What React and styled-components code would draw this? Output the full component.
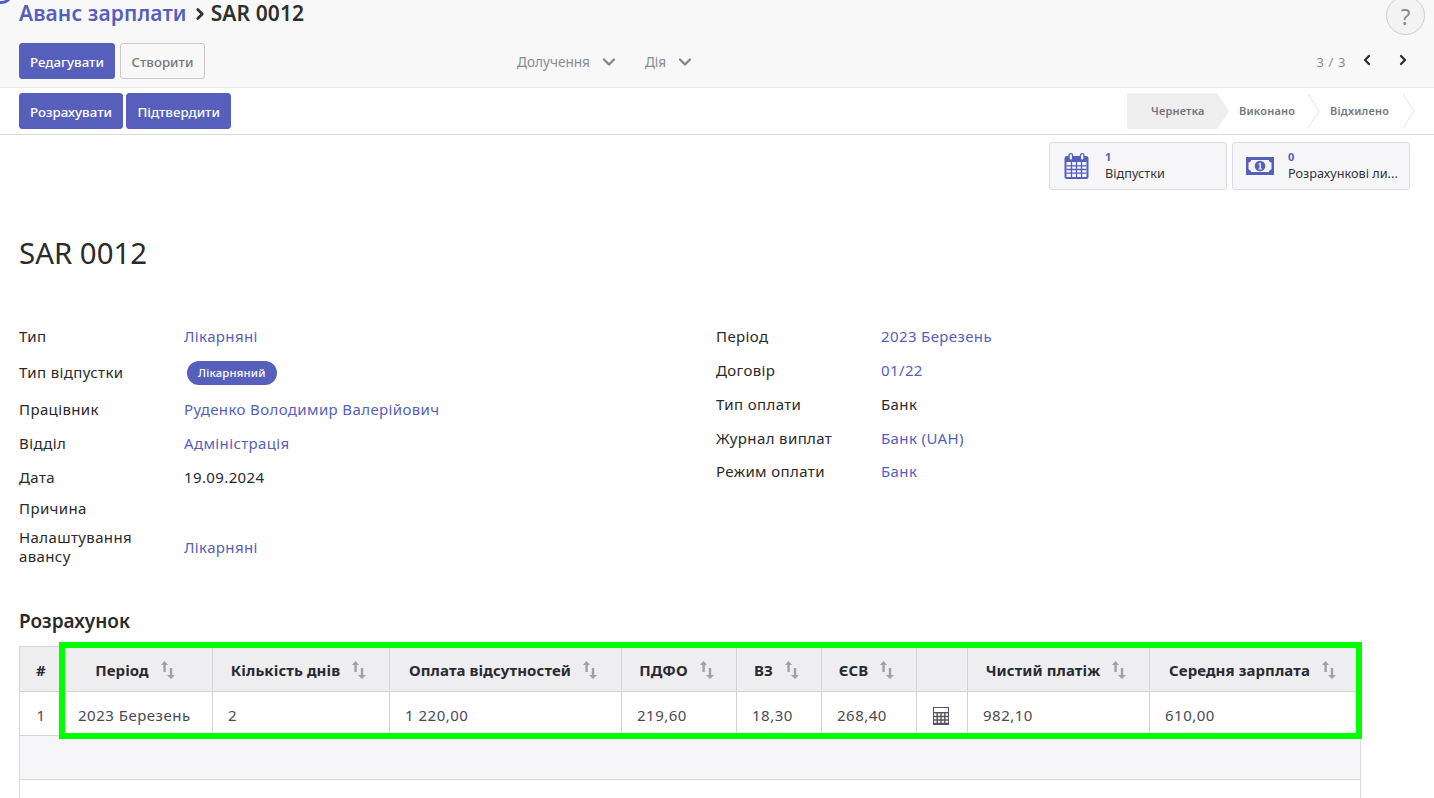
import React from "react";
import styled, { createGlobalStyle } from "styled-components";
import { ChevronRight, ChevronLeft, ChevronDown } from "lucide-react";

const Global = createGlobalStyle`
  html, body { margin: 0; padding: 0; background: #fff; }
  body { font-family: "Noto Sans", sans-serif; color: #212529; overflow: hidden; }
  * { box-sizing: border-box; }
`;

const Page = styled.div`
  position: relative;
  width: 1434px;
  height: 798px;
  overflow: hidden;
  background: #fff;
`;
const Badge = styled.div`
  position: absolute;
  left: -9px;
  top: -10px;
  width: 20px;
  height: 14px;
  border-radius: 50%;
  background: #fff;
  border: 3px solid #565fbb;
`;
const Control = styled.div`
  height: 88px;
  background: #f8f8f9;
  border-bottom: 1px solid #e9e9ea;
  padding: 0 19px;
  display: flex;
  flex-direction: column;
`;
const TopRow = styled.div`
  height: 43px;
  display: flex;
  align-items: flex-start;
  justify-content: space-between;
`;
const Crumbs = styled.div`
  display: flex;
  align-items: center;
  height: 27px;
  font-size: 21px;
  font-weight: 600;
  line-height: 27px;
  letter-spacing: 0.1px;
  color: #2f2f2f;
`;
const CrumbLink = styled.span`
  color: #565fbb;
`;
const Help = styled.div`
  width: 39px;
  height: 39px;
  margin: -4px -10px 0 0;
  border-radius: 50%;
  border: 1px solid #cfcfd2;
  background: #f3f3f4;
  color: #8a8a8e;
  font-size: 22px;
  display: flex;
  align-items: center;
  justify-content: center;
`;
const BottomRow = styled.div`
  display: grid;
  grid-template-columns: 498px 1fr auto;
  align-items: center;
  height: 36px;
`;
const Buttons = styled.div`
  display: flex;
  gap: ${(p) => p.$gap || 5}px;
`;
const Button = styled.div`
  height: 36px;
  padding: 1px ${(p) => p.$px || 10}px 0;
  display: flex;
  align-items: center;
  font-size: 13.3px;
  font-weight: 500;
  border-radius: 3px;
  background: ${(p) => (p.$ghost ? "#f8f8f9" : "#565fbb")};
  color: ${(p) => (p.$ghost ? "#77777c" : "#fff")};
  border: 1px solid ${(p) => (p.$ghost ? "#c8c8cd" : "#565fbb")};
`;
const Menus = styled.div`
  display: flex;
  gap: 26px;
`;
const Menu = styled.div`
  display: flex;
  align-items: center;
  gap: 9px;
  font-size: 13.6px;
  padding-top: 1px;
  color: #8c8c93;
`;
const Pager = styled.div`
  display: flex;
  align-items: center;
  font-size: 13px;
  letter-spacing: 0.6px;
  color: #8c8c93;
  & svg { color: #2b2b33; margin-top: -3px; }
`;
const PagerText = styled.span`
  margin-right: 13px;
  padding-top: 1px;
`;
const PagerGap = styled.span`
  width: ${(p) => p.$w}px;
  display: inline-block;
`;
const StatusRow = styled.div`
  height: 47px;
  border-bottom: 1px solid #d9d9dc;
  padding: 5px 19px 0;
  display: flex;
  justify-content: space-between;
`;
const Status = styled.div`
  display: flex;
  height: 36px;
  padding-right: 12px;
`;
const Step = styled.div`
  position: relative;
  height: 36px;
  display: flex;
  align-items: center;
  padding-bottom: 1px;
  font-size: 11px;
  font-weight: 600;
  letter-spacing: 0.2px;
  color: #75757b;
  width: ${(p) => p.$w}px;
  padding-left: ${(p) => p.$pl}px;
  background: ${(p) => (p.$on ? "#eeeeef" : "transparent")};
  border-radius: ${(p) => (p.$on ? "3px 0 0 3px" : "0")};
`;
const StepArrow = styled.svg`
  position: absolute;
  left: 100%;
  top: 0;
  width: 12px;
  height: 36px;
`;
const Buttonboxes = styled.div`
  display: flex;
  justify-content: flex-end;
  gap: 5px;
  padding: 7px 24px 0 0;
`;
const StatBox = styled.div`
  width: 178px;
  height: 48px;
  background: #f6f6f8;
  border: 1px solid #dcdce1;
  border-radius: 3px;
  display: flex;
  align-items: center;
  font-size: 12.7px;
  line-height: 17px;
  color: #33333a;
`;
const StatIcon = styled.div`
  width: 56px;
  padding-right: 3px;
  display: flex;
  justify-content: center;
`;
const StatText = styled.div`
  display: flex;
  flex-direction: column;
  margin: -1px 0 0 -1px;
`;
const StatNum = styled.span`
  font-size: 11px;
  font-weight: 700;
  line-height: 16px;
  color: #565fbb;
`;
const Title = styled.h1`
  margin: 44px 0 0 19px;
  font-size: 29.4px;
  line-height: 38px;
  font-weight: 400;
  color: #2a2a2a;
`;
const FormGrid = styled.div`
  margin: 46px 0 0 19px;
  display: grid;
  grid-template-columns: 697px 1fr;
`;
const Group = styled.div`
  display: grid;
  grid-template-columns: 165px 1fr;
  align-items: center;
  align-content: start;
  font-size: 15px;
  line-height: 19px;
  letter-spacing: 0.38px;
`;
const Label = styled.div`
  height: ${(p) => p.$h}px;
  display: flex;
  align-items: center;
  color: #2a2a2a;
`;
const Value = styled.div`
  color: ${(p) => (p.$link ? "#565fbb" : "#2a2a2a")};
`;
const Tag = styled.span`
  display: inline-flex;
  align-items: center;
  height: 24px;
  margin-left: 3px;
  padding: 0 11px;
  border-radius: 12px;
  background: #565fbb;
  color: #fff;
  font-size: 11.3px;
  font-weight: 500;
  letter-spacing: 0.2px;
`;
const Section = styled.h2`
  margin: 38px 0 0 19px;
  font-size: 19px;
  line-height: 26px;
  font-weight: 600;
  color: #2a2a2a;
`;
const TableWrap = styled.div`
  position: relative;
  margin: 12px 0 0 19px;
  width: 1341px;
`;
const Table = styled.table`
  width: 1341px;
  border-collapse: collapse;
  table-layout: fixed;
  font-size: 15px;
  letter-spacing: 0.5px;
  border-left: 1px solid #d9d9dc;
  border-right: 1px solid #d9d9dc;
  border-top: 1px solid #d9d9dc;
`;
const Th = styled.th`
  height: 45px;
  padding: 1px ${(p) => p.$pr ?? 5}px 0 0;
  background: #eeeef0;
  border-left: 1px solid #d3d3d6;
  border-bottom: 1px solid #d3d3d6;
  font-weight: 700;
  font-size: 15px;
  letter-spacing: 0.08px;
  color: #2a2a33;
  text-align: center;
`;
const ThInner = styled.span`
  display: inline-flex;
  align-items: center;
  gap: 12px;
`;
const Td = styled.td`
  height: 44px;
  padding: 2px ${(p) => p.$pr ?? 0}px 0 ${(p) => p.$pl ?? 15}px;
  border-left: 1px solid #d3d3d6;
  border-bottom: 1px solid #d3d3d6;
  color: #4a4a55;
  text-align: ${(p) => p.$align || "left"};
`;
const Filler = styled.td`
  height: 44px;
  background: #f6f6f8;
  border-bottom: 1px solid #d9d9dc;
`;
const Blank = styled.td`
  height: 40px;
`;
const Highlight = styled.div`
  position: absolute;
  left: 40px;
  top: -4px;
  width: 1303px;
  height: 97px;
  border: 6px solid #00ff00;
  pointer-events: none;
`;

const Sort = () => (
  <svg width="14" height="18" viewBox="0 0 14 18" fill="#a0a0a5" aria-hidden="true">
    <path d="M3.5 0 L7 4 H4.8 V11 H2.4 V4 H0 Z" />
    <path d="M10 18 L6 14 H8.8 V7 H11.2 V14 H14 Z" />
  </svg>
);
const Calendar = () => (
  <svg width="25" height="26" viewBox="0 0 25 26" aria-hidden="true">
    <rect x=".5" y="3" width="24" height="23" rx="2.5" fill="#565fbb" />
    <rect x="2.5" y="9" width="20" height="15" fill="#f6f6f8" />
    <path d="M2.5 12.8H22.5M2.5 16.5H22.5M2.5 20.2H22.5M7.5 9V24M12.5 9V24M17.5 9V24" stroke="#565fbb" strokeWidth="1.3" />
    <rect x="5" y=".7" width="3.6" height="6.5" rx="1.8" fill="#f6f6f8" stroke="#565fbb" strokeWidth="1.3" />
    <rect x="16.4" y=".7" width="3.6" height="6.5" rx="1.8" fill="#f6f6f8" stroke="#565fbb" strokeWidth="1.3" />
  </svg>
);
const Money = () => (
  <svg width="28" height="18" viewBox="0 0 28 18" aria-hidden="true">
    <path fillRule="evenodd" d="M0 0H28V18H0Z M5 3 C5 4.5 4 5.5 2.5 5.5 V12.5 C4 12.5 5 13.5 5 15 H23 C23 13.5 24 12.5 25.5 12.5 V5.5 C24 5.5 23 4.5 23 3Z" fill="#565fbb" />
    <circle cx="14" cy="9" r="5.3" fill="#565fbb" />
    <path d="M12.5 6.4 L14.8 5.5 V11.6 H15.9 V12.6 H12.5 V11.6 H13.5 V7 L12.5 7.4Z" fill="#fff" />
  </svg>
);
const Calculator = () => (
  <svg width="16" height="18" viewBox="0 0 16 18" aria-hidden="true" style={{ verticalAlign: "middle" }}>
    <rect x=".5" y=".5" width="15" height="17" fill="#fff" stroke="#55555f" />
    <rect x="0" y="5" width="16" height="1.4" fill="#55555f" />
    <path d="M1 9.5H15M1 13H15M1 16.5H15" stroke="#55555f" strokeWidth="1.4" />
    <path d="M4.2 6V17M8 6V17M11.8 6V17" stroke="#55555f" strokeWidth="1.4" />
  </svg>
);

const leftRows = [
  ["Тип", 36, "Лікарняні", true],
  ["Тип відпустки", 37, "tag"],
  ["Працівник", 36, "Руденко Володимир Валерійович", true],
  ["Відділ", 33, "Адміністрація", true],
  ["Дата", 34, "19.09.2024"],
  ["Причина", 29, ""],
  [<>Налаштування<br />авансу</>, 48, "Лікарняні", true],
];
const rightRows = [
  ["Період", 36, "2023 Березень", true],
  ["Договір", 33, "01/22", true],
  ["Тип оплати", 34, "Банк"],
  ["Журнал виплат", 34, "Банк (UAH)", true],
  ["Режим оплати", 33, "Банк", true],
];
const cols = [
  ["Період", 150, "2023 Березень"],
  ["Кількість днів", 177, "2"],
  ["Оплата відсутностей", 232, "1 220,00"],
  ["ПДФО", 115, "219,60"],
  ["ВЗ", 85, "18,30"],
  ["ЄСВ", 95, "268,40"],
  ["", 51, "calc"],
  ["Чистий платіж", 182, "982,10"],
  ["Середня зарплата", 211, "610,00"],
];

const FormRows = ({ rows }) => (
  <Group>
    {rows.map(([label, h, value, link], i) => (
      <React.Fragment key={i}>
        <Label $h={h}>{label}</Label>
        <Value $link={link}>{value === "tag" ? <Tag>Лікарняний</Tag> : value}</Value>
      </React.Fragment>
    ))}
  </Group>
);

const steps = [
  ["Чернетка", 90, 24, true],
  ["Виконано", 91, 22, false],
  ["Відхилено", 95, 22, false],
];

export default function App() {
  return (
    <Page>
      <Global />
      <Badge />
      <Control>
        <TopRow>
          <Crumbs>
            <CrumbLink>Аванс зарплати</CrumbLink>
            <ChevronRight size={18} strokeWidth={3.6} color="#2f2f2f" style={{ margin: "0 2px 0 4px" }} />
            SAR 0012
          </Crumbs>
          <Help>?</Help>
        </TopRow>
        <BottomRow>
          <Buttons>
            <Button>Редагувати</Button>
            <Button $ghost $px={10.5}>Створити</Button>
          </Buttons>
          <Menus>
            <Menu>Долучення <ChevronDown size={20} strokeWidth={2.8} color="#85858b" /></Menu>
            <Menu>Дія <ChevronDown size={20} strokeWidth={2.8} color="#85858b" /></Menu>
          </Menus>
          <Pager>
            <PagerText>3 / 3</PagerText>
            <ChevronLeft size={16} strokeWidth={3.4} />
            <PagerGap $w={20} />
            <ChevronRight size={16} strokeWidth={3.4} />
            <PagerGap $w={4} />
          </Pager>
        </BottomRow>
      </Control>
      <StatusRow>
        <Buttons $gap={3}>
          <Button>Розрахувати</Button>
          <Button $px={10.5}>Підтвердити</Button>
        </Buttons>
        <Status>
          {steps.map(([t, w, pl, on]) => (
            <Step key={t} $w={w} $pl={pl} $on={on}>
              {t}
              <StepArrow viewBox="0 0 12 36" aria-hidden="true">
                {on ? (
                  <path d="M0 0L12 18L0 36Z" fill="#eeeeef" />
                ) : (
                  <path d="M0 1L11 18L0 35" fill="none" stroke="#e3e3e6" />
                )}
              </StepArrow>
            </Step>
          ))}
        </Status>
      </StatusRow>
      <Buttonboxes>
        <StatBox>
          <StatIcon><Calendar /></StatIcon>
          <StatText><StatNum>1</StatNum>Відпустки</StatText>
        </StatBox>
        <StatBox>
          <StatIcon><Money /></StatIcon>
          <StatText><StatNum>0</StatNum>Розрахункові ли...</StatText>
        </StatBox>
      </Buttonboxes>
      <Title>SAR 0012</Title>
      <FormGrid>
        <FormRows rows={leftRows} />
        <FormRows rows={rightRows} />
      </FormGrid>
      <Section style={{ marginTop: 37 }}>Розрахунок</Section>
      <TableWrap>
        <Table>
          <colgroup>
            <col style={{ width: 43 }} />
            {cols.map(([t, w]) => <col key={t + w} style={{ width: w }} />)}
          </colgroup>
          <thead>
            <tr>
              <Th $pr={0}>#</Th>
              {cols.map(([t, w]) => (
                <Th key={t + w}>
                  {t && <ThInner>{t}<Sort /></ThInner>}
                </Th>
              ))}
            </tr>
          </thead>
          <tbody>
            <tr>
              <Td $pl={0} $align="center">1</Td>
              {cols.map(([t, w, v]) => (
                <Td key={t + w} $pl={v === "calc" ? 0 : 15} $pr={v === "calc" ? 2 : 0} $align={v === "calc" ? "center" : "left"}>
                  {v === "calc" ? <Calculator /> : v}
                </Td>
              ))}
            </tr>
            <tr><Filler colSpan={10} /></tr>
            <tr><Blank colSpan={10} /></tr>
          </tbody>
        </Table>
        <Highlight />
      </TableWrap>
    </Page>
  );
}
